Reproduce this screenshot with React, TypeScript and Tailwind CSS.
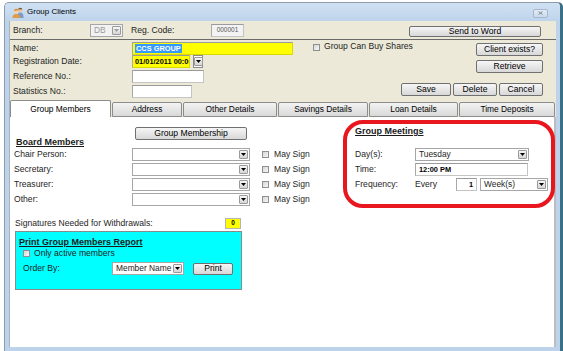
import React from "react";

const label = "shrink-0 whitespace-nowrap text-[8.6px] leading-none text-[#1e1e1e]";
const heading = "whitespace-nowrap text-[9px] font-bold underline leading-[11px] text-[#1a1a1a]";

function Btn({ text, className }: { text: string; className?: string }) {
  return (
    <div
      className={`flex shrink-0 items-center justify-center whitespace-nowrap rounded-[2px] border border-[#707070] bg-linear-to-b from-[#f6f6f6] to-[#d8d8d8] text-[8.6px] leading-none text-black ${className ?? ""}`}
    >
      {text}
    </div>
  );
}

function Arrow({ disabled }: { disabled?: boolean }) {
  return (
    <div className="my-px mr-px flex w-[9px] shrink-0 items-center justify-center rounded-[1px] border border-[#9a9a9a] bg-linear-to-b from-[#f7f7f7] to-[#d6d6d6]">
      <svg width="5" height="3" viewBox="0 0 5 3">
        <path d="M0 0H5L2.5 3Z" fill={disabled ? "#a0a0a0" : "#000"} />
      </svg>
    </div>
  );
}

function Combo({ value, className, disabled }: { value?: string; className?: string; disabled?: boolean }) {
  return (
    <div
      className={`flex h-[13px] shrink-0 items-stretch border border-[#a6a6a6] ${disabled ? "bg-[#f2f2f2]" : "bg-white"} ${className ?? ""}`}
    >
      <div
        className={`flex flex-1 items-center overflow-hidden whitespace-nowrap pl-[3px] text-[8.4px] leading-none ${disabled ? "text-[#9a9a9a]" : "text-[#1e1e1e]"}`}
      >
        {value}
      </div>
      <Arrow disabled={disabled} />
    </div>
  );
}

function Input({ className, children }: { className?: string; children?: React.ReactNode }) {
  return (
    <div
      className={`flex h-[13px] shrink-0 items-center overflow-hidden whitespace-nowrap border border-[#c4c4c4] border-t-[#9a9a9a] border-l-[#a8a8a8] ${className ?? ""}`}
    >
      {children}
    </div>
  );
}

function Check() {
  return (
    <div className="h-[7px] w-[7px] shrink-0 border border-[#8e8f8f] bg-linear-to-br from-[#d6d6d6] to-[#f7f7f7]" />
  );
}

function PeopleIcon() {
  return (
    <svg width="12" height="11" viewBox="0 0 12 11">
      <circle cx="8.2" cy="3" r="2.1" fill="#e9c29b" />
      <path d="M6.1 2.6Q6.4 0.6 8.3 0.7Q10.2 0.8 10.3 2.6Q9 1.7 6.1 2.6Z" fill="#7a5330" />
      <path d="M5 11Q5 5.6 8.2 5.6Q11.6 5.6 11.6 11Z" fill="#7d9cc4" />
      <circle cx="4.3" cy="4.2" r="2.2" fill="#f3cfa6" />
      <path d="M2 3.9Q2.2 1.6 4.4 1.7Q6.6 1.8 6.6 3.8Q5.2 2.7 2 3.9Z" fill="#d28a2c" />
      <path d="M0.4 11Q0.4 6.9 4.3 6.9Q8.2 6.9 8.2 11Z" fill="#e09a48" />
    </svg>
  );
}

const tabs = [
  { name: "Address", w: "w-[70px]" },
  { name: "Other Details", w: "w-[94px]" },
  { name: "Savings Details", w: "w-[90px]" },
  { name: "Loan Details", w: "w-[89px]" },
  { name: "Time Deposits", w: "w-[96px]" },
];

const boardRows = ["Chair Person:", "Secretary:", "Treasurer:", "Other:"];

export default function App() {
  return (
    <div className="h-[351px] w-[563px] overflow-hidden bg-white pl-[4px] pt-[2px] font-['Liberation_Sans',Arial,sans-serif]">
      <div className="flex h-[360px] w-[559px] flex-col rounded-t-[5px] border border-r-[3px] border-[#8d9cab] border-r-[#3a7088] bg-[#bcd3eb]">
        {/* Title bar */}
        <div className="flex h-[18px] shrink-0 items-center rounded-t-[4px] bg-linear-to-b from-[#d0e1f3] to-[#bed4ec] pl-[7px] pr-[12px]">
          <PeopleIcon />
          <span className="ml-[3px] text-[8px] leading-none text-black">Group Clients</span>
          <div className="ml-auto mt-[2px] flex h-[9px] w-[15px] items-center justify-center rounded-[2px] border border-[#a5b8cc] bg-linear-to-b from-[#e2ebf5] to-[#cbdaea]">
            <svg width="5" height="4" viewBox="0 0 5 4">
              <path d="M0.5 0.5L4.5 3.5M4.5 0.5L0.5 3.5" stroke="#7b8a99" strokeWidth="1" />
            </svg>
          </div>
        </div>

        {/* Body */}
        <div className="flex flex-1 flex-col pb-[14px] pl-[4px] pr-[5px]">
          <div className="flex w-[547px] flex-1 flex-col border-l border-[#a9b3bd]">
            {/* Header area */}
            <div className="flex h-[79px] shrink-0 flex-col bg-[#ece9d8]">
              <div className="flex h-[19px] shrink-0 items-center border-b border-[#6a6a6a] pl-[3px] pr-[15px]">
                <span className={`${label} w-[77px]`}>Branch:</span>
                <Combo value="DB" disabled className="w-[33px]" />
                <span className={`${label} ml-[8px] w-[80px]`}>Reg. Code:</span>
                <Input className="w-[33px] justify-center bg-[#f3f3f3] text-[6.5px] text-[#555]">000001</Input>
                <Btn text="Send to Word" className="ml-auto mt-[3px] h-[11px] w-[132px]" />
              </div>

              <div className="flex flex-1">
                <div className="flex min-w-0 flex-1 flex-col pl-[3px] pt-[2px]">
                  <div className="flex h-[12px] items-center">
                    <span className={`${label} w-[119px]`}>Name:</span>
                    <Input className="h-[12px] w-[161px] border-[#d9d900] bg-[#ffff00] pl-[2px]">
                      <span className="bg-[#3399ff] px-px text-[7.4px] font-bold leading-[9px] text-white">CCS GROUP</span>
                    </Input>
                    <div className="ml-[20px] mt-[-2px]">
                      <Check />
                    </div>
                    <span className={`${label} ml-[4px] mt-[-4px]`}>Group Can Buy Shares</span>
                  </div>
                  <div className="mt-[1px] flex h-[13px] items-center">
                    <span className={`${label} w-[119px]`}>Registration Date:</span>
                    <Input className="h-[12px] w-[58px] border-[#d9d900] bg-[#ffff00] pl-[2px] text-[7.4px] font-bold text-black">
                      01/01/2011 00:00
                    </Input>
                    <div className="ml-[3px] flex h-[13px] w-[10px] items-stretch border border-[#8a8a8a] bg-white">
                      <Arrow />
                    </div>
                  </div>
                  <div className="mt-[2px] flex h-[13px] items-center">
                    <span className={`${label} w-[119px]`}>Reference No.:</span>
                    <Input className="w-[72px] bg-white" />
                  </div>
                  <div className="mt-[2px] flex h-[13px] items-center">
                    <span className={`${label} w-[119px]`}>Statistics No.:</span>
                    <Input className="w-[60px] bg-white" />
                  </div>
                </div>

                <div className="flex shrink-0 flex-col items-end pr-[13px] pt-[3px]">
                  <Btn text="Client exists?" className="h-[13px] w-[67px]" />
                  <Btn text="Retrieve" className="mt-[4px] h-[13px] w-[67px]" />
                  <div className="mt-[10px] flex gap-[2px]">
                    <Btn text="Save" className="h-[13px] w-[50px]" />
                    <Btn text="Delete" className="h-[13px] w-[44px]" />
                    <Btn text="Cancel" className="h-[13px] w-[44px]" />
                  </div>
                </div>
              </div>
            </div>

            {/* Tabs */}
            <div className="flex h-[17px] shrink-0 items-end bg-[#ece9d8]">
              <div className="flex h-[17px] w-[101px] items-center justify-center rounded-t-[2px] border border-b-0 border-[#8c8c8c] bg-white text-[8.4px] leading-none text-black">
                Group Members
              </div>
              {tabs.map((t) => (
                <div
                  key={t.name}
                  className={`ml-px flex h-[15px] ${t.w} items-center justify-center rounded-t-[2px] border border-[#8c8c8c] bg-linear-to-b from-[#f3f3f3] to-[#d9d9d9] text-[8.4px] leading-none text-black`}
                >
                  {t.name}
                </div>
              ))}
            </div>

            {/* Tab page */}
            <div className="flex flex-1 border-r-2 border-[#bdbdbd] bg-white">
              <div className="flex w-[333px] shrink-0 flex-col">
                <Btn text="Group Membership" className="ml-[125px] mt-[10px] h-[13px] w-[112px]" />
                <div className={`${heading} ml-[6px] mt-[-3px] h-[10px] leading-[10px]`}>Board Members</div>
                {boardRows.map((r) => (
                  <div key={r} className="flex h-[15px] items-center pl-[4px]">
                    <span className={`${label} w-[118px]`}>{r}</span>
                    <Combo className="w-[118px]" />
                    <div className="ml-[12px]">
                      <Check />
                    </div>
                    <span className={`${label} ml-[5px]`}>May Sign</span>
                  </div>
                ))}
                <div className="mt-[11px] flex h-[11px] items-center pl-[5px]">
                  <span className={`${label} w-[210px]`}>Signatures Needed for Withdrawals:</span>
                  <div className="flex h-[11px] w-[16px] items-center justify-center border border-[#b4b4b4] bg-[#ffff00] text-[6.5px] font-bold leading-none text-black">
                    0
                  </div>
                </div>
                <div className="ml-[5px] mt-[2px] flex h-[59px] w-[227px] flex-col border border-[#8a8a8a] bg-[#00ffff] pl-[3px] pt-[5px]">
                  <div className={`${heading} h-[11px]`}>Print Group Members Report</div>
                  <div className="ml-[4px] flex h-[10px] items-center">
                    <Check />
                    <span className={`${label} ml-[4px]`}>Only active members</span>
                  </div>
                  <div className="mt-[4px] flex h-[13px] items-center">
                    <span className={`${label} ml-[4px] w-[89px]`}>Order By:</span>
                    <Combo value="Member Name" className="w-[72px]" />
                    <Btn text="Print" className="ml-[9px] h-[12px] w-[40px]" />
                  </div>
                </div>
              </div>

              <div className="mt-[3px] flex h-[88px] w-[212px] shrink-0 flex-col rounded-[20px] border-[4px] border-[#e8161e] pl-[8px] pt-[2px]">
                <div className={heading}>Group Meetings</div>
                <div className="mt-[10px] flex h-[15px] items-center">
                  <span className={`${label} w-[60px]`}>Day(s):</span>
                  <Combo value="Tuesday" className="w-[114px]" />
                </div>
                <div className="flex h-[15px] items-center">
                  <span className={`${label} w-[60px]`}>Time:</span>
                  <Input className="w-[113px] bg-white pl-[3px] text-[7.4px] font-bold text-black">12:00 PM</Input>
                </div>
                <div className="flex h-[15px] items-center">
                  <span className={`${label} w-[60px]`}>Frequency:</span>
                  <span className={`${label} w-[41px]`}>Every</span>
                  <Input className="w-[21px] justify-end bg-white pr-[3px] text-[7.4px] font-bold text-black">1</Input>
                  <Combo value="Week(s)" className="ml-[3px] w-[68px]" />
                </div>
              </div>
            </div>
          </div>
        </div>
      </div>
    </div>
  );
}
